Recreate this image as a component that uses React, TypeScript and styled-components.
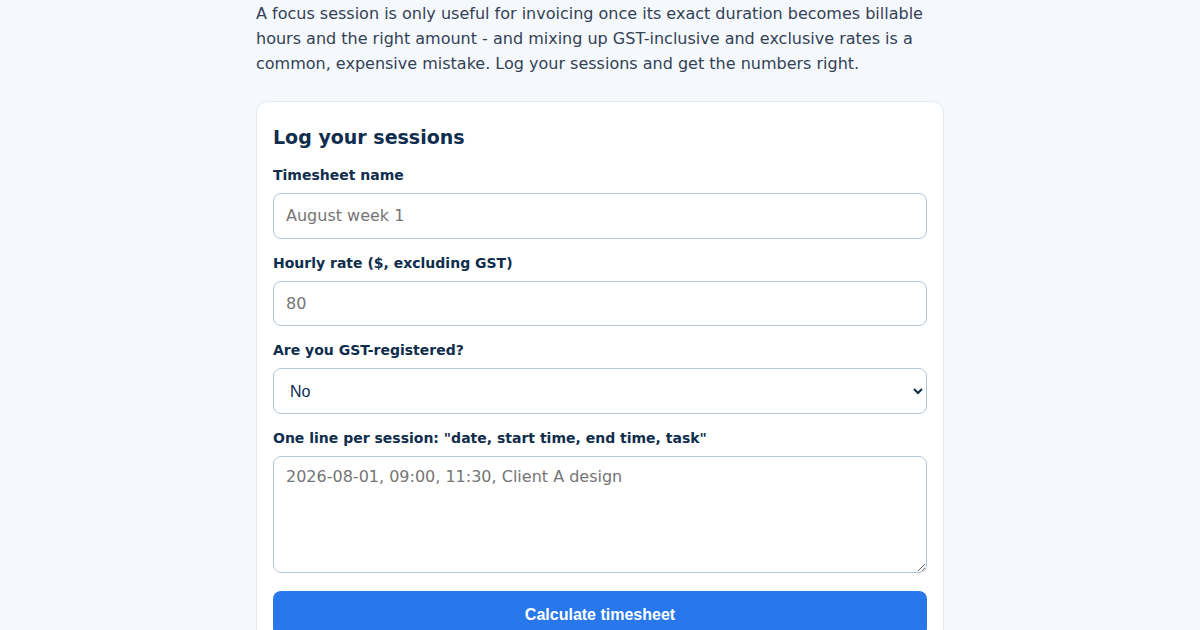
import React, { FC } from "react";
import styled, { createGlobalStyle } from "styled-components";

const GlobalStyle = createGlobalStyle`
  body {
    margin: 0;
    background: #f5f9fd;
    font-family: "DejaVu Sans", sans-serif;
  }
`;

const App: FC = () => {
  return (
    <>
      <GlobalStyle />
      <Main>
        <Intro>
          A focus session is only useful for invoicing once its exact duration
          becomes billable hours and the right amount - and mixing up
          GST-inclusive and exclusive rates is a common, expensive mistake. Log
          your sessions and get the numbers right.
        </Intro>
        <Card>
          <Title>Log your sessions</Title>
          <Field>
            <Label htmlFor="name">Timesheet name</Label>
            <Input id="name" placeholder="August week 1" />
          </Field>
          <Field>
            <Label htmlFor="rate">Hourly rate ($, excluding GST)</Label>
            <Input id="rate" placeholder="80" />
          </Field>
          <Field>
            <Label htmlFor="gst">Are you GST-registered?</Label>
            <Select id="gst" defaultValue="no">
              <option value="no">No</option>
              <option value="yes">Yes</option>
            </Select>
          </Field>
          <Field>
            <Label htmlFor="sessions">
              One line per session: "date, start time, end time, task"
            </Label>
            <TextArea
              id="sessions"
              placeholder="2026-08-01, 09:00, 11:30, Client A design"
            />
          </Field>
          <Button type="button">Calculate timesheet</Button>
        </Card>
      </Main>
    </>
  );
};

const Main = styled.div`
  width: 100%;
  max-width: 688px;
  margin: 0 auto;
`;

const Intro = styled.p`
  margin: 1px 0 25px;
  font-size: 16px;
  line-height: 25px;
  color: #334155;
`;

const Card = styled.div`
  background: #fff;
  border: 1px solid #e2e8f0;
  border-radius: 12px;
  padding: 22px 16px 16px;
`;

const Title = styled.h2`
  margin: 0 0 15px;
  font-size: 19px;
  line-height: 26px;
  font-weight: 700;
  color: #0f2d4d;
`;

const Field = styled.div`
  display: flex;
  flex-direction: column;
  margin-bottom: 14px;
`;

const Label = styled.label`
  font-size: 14px;
  line-height: 21px;
  font-weight: 700;
  color: #0f2d4d;
  margin-bottom: 7px;
`;

const Input = styled.input`
  box-sizing: border-box;
  height: 45.6px;
  padding: 0 12px;
  font-family: "DejaVu Sans", sans-serif;
  font-size: 16px;
  color: #0f2d4d;
  border: 1px solid #b8c4d9;
  border-radius: 8px;
  background: #fff;
  outline: none;

  &::placeholder {
    color: #757575;
  }
`;

const Select = styled.select`
  box-sizing: border-box;
  height: 45.6px;
  padding: 1px 8px 0 12px;
  font-family: "Liberation Sans", Arial, sans-serif;
  font-size: 16px;
  color: #0f2d4d;
  border: 1px solid #b8c4d9;
  border-radius: 8px;
  background: #fff;
`;

const TextArea = styled.textarea`
  display: block;
  box-sizing: border-box;
  height: 117.6px;
  padding: 9px 12px;
  font-family: "DejaVu Sans", sans-serif;
  font-size: 16px;
  line-height: 1.4;
  color: #0f2d4d;
  border: 1px solid #b8c4d9;
  border-radius: 8px;
  background: #fff;
  outline: none;

  &::placeholder {
    color: #757575;
  }
`;

const Button = styled.button`
  display: block;
  width: 100%;
  height: 46px;
  margin-top: 18px;
  padding-top: 2px;
  border: none;
  border-radius: 8px;
  background: #2878ec;
  color: #fff;
  font-family: "Liberation Sans", Arial, sans-serif;
  font-size: 16px;
  font-weight: 700;
  cursor: pointer;
`;

export default App;
